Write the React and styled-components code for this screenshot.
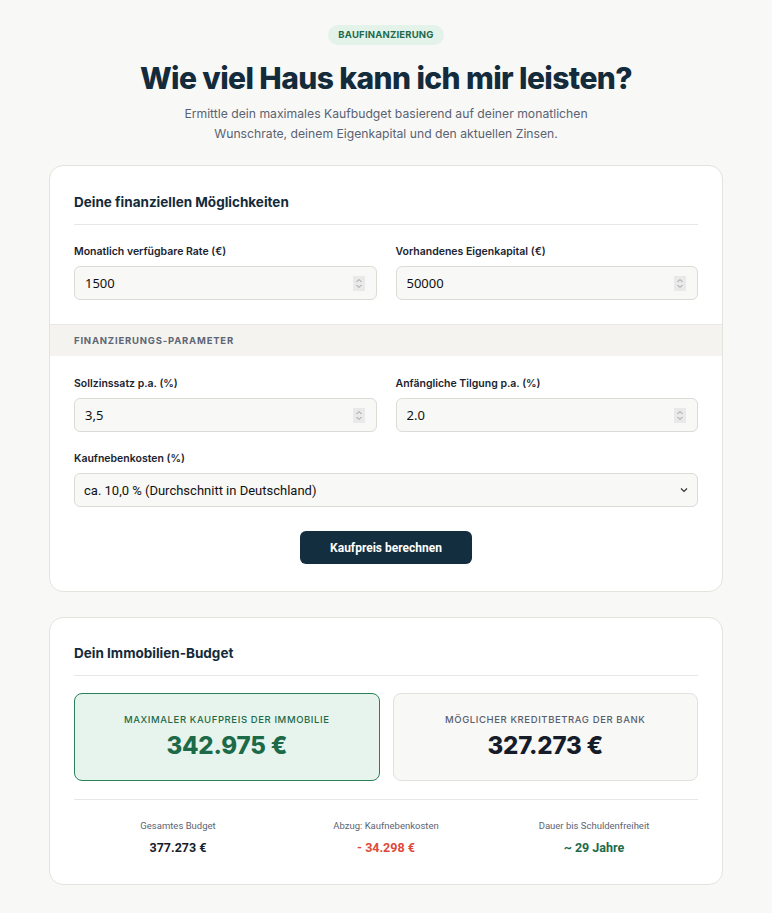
import React from "react";
import styled, { createGlobalStyle } from "styled-components";

const Global = createGlobalStyle`
  * { box-sizing: border-box; }
  html, body { margin: 0; padding: 0; background: #f8f8f7; }
  body { font-family: Inter, "Noto Sans", sans-serif; color: #142a3a; }
`;

const Page = styled.div`
  width: 772px;
  padding: 25px 49px 28px;
  display: flex;
  flex-direction: column;
  align-items: center;
`;

const Badge = styled.div`
  background: #e3f3ea;
  color: #1e6a4c;
  font-size: 9.5px;
  font-weight: 700;
  letter-spacing: 0.2px;
  padding: 5px 10px;
  border-radius: 999px;
  line-height: 10px;
`;

const Title = styled.h1`
  margin: 14px 0 0;
  font-size: 30px;
  line-height: 38px;
  font-weight: 800;
  letter-spacing: -0.6px;
  color: #132b3b;
`;

const Subtitle = styled.p`
  margin: 7px 0 0;
  max-width: 410px;
  text-align: center;
  font-size: 12.2px;
  line-height: 20px;
  color: #5b6271;
`;

const Card = styled.section`
  width: 100%;
  margin-top: ${(p) => p.$mt}px;
  background: #fff;
  border: 1px solid #e4e3de;
  border-radius: 14px;
  padding: ${(p) => p.$pt}px 24px ${(p) => p.$pb}px;
  display: flex;
  flex-direction: column;
`;

const CardTitle = styled.h2`
  margin: 0;
  font-size: 13.5px;
  font-weight: 700;
  line-height: 20px;
  color: #142a3a;
  padding-bottom: 12px;
  border-bottom: 1px solid #e8e7e3;
`;

const Grid = styled.div`
  display: grid;
  grid-template-columns: 1fr 1fr;
  column-gap: 19px;
  margin-top: ${(p) => p.$mt || 0}px;
`;

const Field = styled.div`
  display: flex;
  flex-direction: column;
  margin-top: ${(p) => p.$mt || 0}px;
`;

const Label = styled.label`
  font-size: 10.5px;
  font-weight: 600;
  line-height: 14px;
  color: #1a2330;
  margin-bottom: 7px;
`;

const InputBox = styled.div`
  height: 34px;
  border: 1px solid #dcdbd6;
  border-radius: 6px;
  background: #f8f8f6;
  display: flex;
  align-items: center;
  padding: 0 11px 0 10px;
`;

const InputText = styled.input`
  flex: 1;
  min-width: 0;
  border: none;
  outline: none;
  background: transparent;
  font-family: "Noto Sans", sans-serif;
  font-size: 13px;
  color: #111;
  padding: 0;
`;

const Spinner = styled.span`
  width: 12px;
  height: 15px;
  background: #e9e9e9;
  display: flex;
  align-items: center;
  justify-content: center;
`;

const Band = styled.div`
  margin: 24px -24px 0;
  background: #f4f3ef;
  border-top: 1px solid #e8e7e3;
  padding: 8px 24px;
  font-size: 9.5px;
  font-weight: 700;
  letter-spacing: 0.8px;
  line-height: 15px;
  color: #5e6574;
`;

const SelectBox = styled.div`
  height: 34px;
  border: 1px solid #dcdbd6;
  border-radius: 6px;
  background: #f8f8f6;
  display: flex;
  align-items: center;
  padding: 0 9px 0 0;
`;

const Select = styled.select`
  flex: 1;
  height: 100%;
  appearance: none;
  border: none;
  outline: none;
  background: transparent;
  font-family: Roboto, sans-serif;
  font-size: 13px;
  color: #111;
  padding: 0 9px;
`;

const Button = styled.button`
  align-self: center;
  margin-top: 24px;
  width: 172px;
  height: 33px;
  background: #132e3e;
  color: #fff;
  border: none;
  border-radius: 6px;
  font-family: Roboto, sans-serif;
  font-size: 12px;
  font-weight: 700;
`;

const ResultGrid = styled.div`
  display: grid;
  grid-template-columns: 1fr 1fr;
  gap: 13px;
  margin-top: 17px;
`;

const ResultBox = styled.div`
  height: 88px;
  border-radius: 8px;
  border: 1px solid ${(p) => (p.$primary ? "#2a8058" : "#e2e1dc")};
  background: ${(p) => (p.$primary ? "#e7f4ed" : "#f8f8f6")};
  display: flex;
  flex-direction: column;
  align-items: center;
  justify-content: center;
  gap: 6px;
`;

const ResultLabel = styled.div`
  font-size: 9.5px;
  font-weight: 500;
  letter-spacing: 0.6px;
  color: ${(p) => (p.$primary ? "#1d6a48" : "#575e6d")};
`;

const ResultValue = styled.div`
  font-size: 24px;
  font-weight: 800;
  line-height: 30px;
  letter-spacing: -0.2px;
  color: ${(p) => (p.$primary ? "#1c6a48" : "#161c2a")};
`;

const Stats = styled.div`
  margin-top: 18px;
  border-top: 1px solid #e8e7e3;
  padding: 20px 0 5px;
  display: grid;
  grid-template-columns: repeat(3, 1fr);
`;

const Stat = styled.div`
  display: flex;
  flex-direction: column;
  align-items: center;
  gap: 8px;
  font-family: Roboto, sans-serif;
`;

const StatLabel = styled.div`
  font-size: 9.5px;
  color: #5d6372;
  line-height: 12px;
`;

const StatValue = styled.div`
  font-size: 12.5px;
  font-weight: 700;
  line-height: 16px;
  color: ${(p) => p.$color};
`;

const SpinIcon = () => (
  <svg width="8" height="11" viewBox="0 0 8 11" fill="none" stroke="#9a9a9a" strokeWidth="1">
    <path d="M1.5 4 L4 1.5 L6.5 4" />
    <path d="M1.5 7 L4 9.5 L6.5 7" />
  </svg>
);

const Chevron = () => (
  <svg width="8" height="6" viewBox="0 0 8 6" fill="none" stroke="#333" strokeWidth="1.2">
    <path d="M1 1.5 L4 4.5 L7 1.5" />
  </svg>
);

const NumberField = ({ label, value }) => (
  <Field>
    <Label>{label}</Label>
    <InputBox>
      <InputText type="text" defaultValue={value} />
      <Spinner>
        <SpinIcon />
      </Spinner>
    </InputBox>
  </Field>
);

export default function App() {
  return (
    <>
      <Global />
      <Page>
        <Badge>BAUFINANZIERUNG</Badge>
        <Title>Wie viel Haus kann ich mir leisten?</Title>
        <Subtitle>
          Ermittle dein maximales Kaufbudget basierend auf deiner monatlichen Wunschrate, deinem
          Eigenkapital und den aktuellen Zinsen.
        </Subtitle>

        <Card $mt={21} $pt={26} $pb={27}>
          <CardTitle>Deine finanziellen Möglichkeiten</CardTitle>
          <Grid $mt={20}>
            <NumberField label="Monatlich verfügbare Rate (€)" value="1500" />
            <NumberField label="Vorhandenes Eigenkapital (€)" value="50000" />
          </Grid>
          <Band>FINANZIERUNGS-PARAMETER</Band>
          <Grid $mt={21}>
            <NumberField label="Sollzinssatz p.a. (%)" value="3,5" />
            <NumberField label="Anfängliche Tilgung p.a. (%)" value="2.0" />
          </Grid>
          <Field $mt={20}>
            <Label>Kaufnebenkosten (%)</Label>
            <SelectBox>
              <Select defaultValue="10">
                <option value="10">ca. 10,0 % (Durchschnitt in Deutschland)</option>
              </Select>
              <Chevron />
            </SelectBox>
          </Field>
          <Button>Kaufpreis berechnen</Button>
        </Card>

        <Card $mt={25} $pt={25} $pb={23}>
          <CardTitle>Dein Immobilien-Budget</CardTitle>
          <ResultGrid>
            <ResultBox $primary>
              <ResultLabel $primary>MAXIMALER KAUFPREIS DER IMMOBILIE</ResultLabel>
              <ResultValue $primary>342.975 €</ResultValue>
            </ResultBox>
            <ResultBox>
              <ResultLabel>MÖGLICHER KREDITBETRAG DER BANK</ResultLabel>
              <ResultValue>327.273 €</ResultValue>
            </ResultBox>
          </ResultGrid>
          <Stats>
            <Stat>
              <StatLabel>Gesamtes Budget</StatLabel>
              <StatValue $color="#161c2a">377.273 €</StatValue>
            </Stat>
            <Stat>
              <StatLabel>Abzug: Kaufnebenkosten</StatLabel>
              <StatValue $color="#e0493a">- 34.298 €</StatValue>
            </Stat>
            <Stat>
              <StatLabel>Dauer bis Schuldenfreiheit</StatLabel>
              <StatValue $color="#1c6a48">~ 29 Jahre</StatValue>
            </Stat>
          </Stats>
        </Card>
      </Page>
    </>
  );
}
